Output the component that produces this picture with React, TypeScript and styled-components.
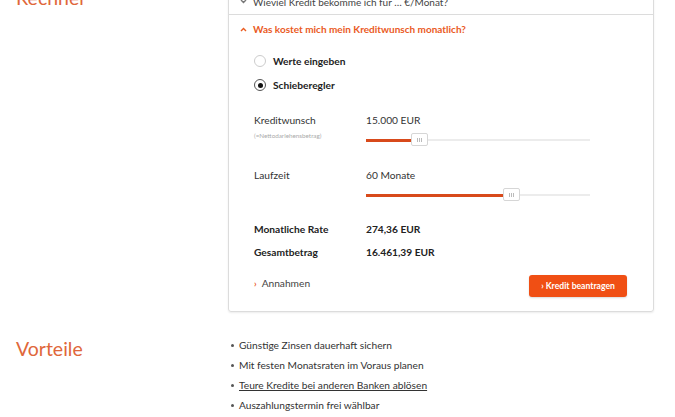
import React from "react";
import styled, { createGlobalStyle } from "styled-components";

const ORANGE = "#ea5a1e";
const TEXT = "10.2px";

const GlobalStyle = createGlobalStyle`
  body {
    margin: 0;
    background: #fff;
    font-family: Lato, "Open Sans", sans-serif;
    color: #333;
    overflow: hidden;
  }
`;

const Page = styled.div`
  margin-top: -14px;
  width: 675px;
`;

const Section = styled.section<{ gap?: number }>`
  display: grid;
  grid-template-columns: 228px 426px;
  margin-top: ${(p) => p.gap ?? 0}px;
`;

const Heading = styled.h2`
  margin: 0;
  padding-left: 16px;
  font-size: 19.5px;
  line-height: 24px;
  font-weight: 400;
  color: #e0673a;
`;

const Card = styled.div`
  border: 1px solid #dcdcdc;
  border-radius: 3px;
  box-shadow: 0 1px 2px rgba(0, 0, 0, 0.08);
  padding-bottom: 14px;
`;

const AccordionHead = styled.div<{ open?: boolean }>`
  display: flex;
  align-items: center;
  gap: 6px;
  height: 28px;
  padding-left: 11px;
  padding-top: ${(p) => (p.open ? 0 : 2)}px;
  box-sizing: border-box;
  font-size: 10px;
  font-weight: ${(p) => (p.open ? 700 : 400)};
  color: ${(p) => (p.open ? ORANGE : "#444")};
  border-bottom: ${(p) => (p.open ? "none" : "1px solid #dcdcdc")};
`;

const Chevron = styled.svg`
  width: 7px;
  height: 5px;
  flex: none;
`;

const Body = styled.div`
  padding: 6px 26px 0 25px;
`;

const RadioRow = styled.label`
  display: flex;
  align-items: center;
  gap: 7px;
  height: 24px;
  font-size: ${TEXT};
  font-weight: 700;
  color: #222;
`;

const RadioDot = styled.span<{ checked?: boolean }>`
  width: 10px;
  height: 10px;
  border-radius: 50%;
  border: 1px solid ${(p) => (p.checked ? "#555" : "#ccc")};
  display: grid;
  place-items: center;
  &::after {
    content: "";
    width: 5px;
    height: 5px;
    border-radius: 50%;
    background: ${(p) => (p.checked ? "#111" : "transparent")};
  }
`;

const SliderBlock = styled.div<{ top: number }>`
  display: grid;
  grid-template-columns: 112px 224px;
  margin-top: ${(p) => p.top}px;
`;

const Label = styled.div`
  font-size: ${TEXT};
  line-height: 12px;
  color: #333;
`;

const SubLabel = styled.div`
  font-size: 6.3px;
  line-height: 8px;
  margin-top: 6px;
  color: #aaa;
`;

const ValueCol = styled.div`
  display: flex;
  flex-direction: column;
  gap: 11px;
`;

const Track = styled.div`
  position: relative;
  height: 2px;
  background: #ececec;
  margin-top: 2px;
`;

const Fill = styled.div`
  height: 3px;
  margin-top: -0.5px;
  background: #d84a1b;
`;

const Thumb = styled.div`
  position: absolute;
  top: -6px;
  width: 17px;
  height: 13px;
  margin-left: -2px;
  background: #fff;
  border: 1px solid #d6d6d6;
  border-radius: 2px;
  box-sizing: border-box;
  display: flex;
  align-items: center;
  justify-content: center;
  gap: 1px;
  & > i {
    width: 1px;
    height: 4px;
    background: #bbb;
  }
`;

const ResultRow = styled.div<{ top: number }>`
  display: grid;
  grid-template-columns: 112px auto;
  margin-top: ${(p) => p.top}px;
  font-size: ${TEXT};
  line-height: 12px;
  font-weight: 700;
  color: #222;
`;

const Footer = styled.div`
  display: flex;
  justify-content: space-between;
  align-items: center;
  margin-top: 17px;
`;

const TextLink = styled.span`
  display: flex;
  align-items: center;
  gap: 5px;
  font-size: ${TEXT};
  color: #444;
  margin-top: -6px;
`;

const Caret = styled.span`
  color: ${ORANGE};
  font-weight: 700;
  font-size: 9px;
`;

const Button = styled.button`
  border: none;
  border-radius: 3px;
  background: #f04f14;
  color: #fff;
  font-family: inherit;
  font-weight: 700;
  font-size: 8.6px;
  height: 22px;
  width: 98px;
  padding: 0;
  box-shadow: 0 1px 2px rgba(0, 0, 0, 0.15);
`;

const List = styled.ul`
  margin: 0;
  padding: 2px 0 0 3px;
  list-style: none;
  display: flex;
  flex-direction: column;
  gap: 8px;
`;

const Item = styled.li<{ link?: boolean }>`
  display: flex;
  align-items: center;
  gap: 5px;
  font-size: ${TEXT};
  line-height: 12px;
  color: #333;
  text-decoration: ${(p) => (p.link ? "underline" : "none")};
  &::before {
    content: "";
    width: 3px;
    height: 3px;
    background: #555;
    border-radius: 50%;
    flex: none;
  }
`;

function Slider({ pct }: { pct: number }) {
  return (
    <Track>
      <Fill style={{ width: `${pct}%` }} />
      <Thumb style={{ left: `${pct}%` }}>
        <i />
        <i />
        <i />
      </Thumb>
    </Track>
  );
}

function ChevronIcon({ up }: { up?: boolean }) {
  return (
    <Chevron viewBox="0 0 7 5">
      <path
        d={up ? "M1 4 L3.5 1.5 L6 4" : "M1 1 L3.5 3.5 L6 1"}
        stroke={up ? ORANGE : "#777"}
        strokeWidth="1.4"
        fill="none"
      />
    </Chevron>
  );
}

export default function App() {
  return (
    <Page>
      <GlobalStyle />
      <Section>
        <Heading>Rechner</Heading>
        <Card>
          <AccordionHead>
            <ChevronIcon />
            Wieviel Kredit bekomme ich für … €/Monat?
          </AccordionHead>
          <AccordionHead open>
            <ChevronIcon up />
            Was kostet mich mein Kreditwunsch monatlich?
          </AccordionHead>
          <Body>
            <RadioRow>
              <RadioDot />
              Werte eingeben
            </RadioRow>
            <RadioRow>
              <RadioDot checked />
              Schieberegler
            </RadioRow>
            <SliderBlock top={17}>
              <div>
                <Label>Kreditwunsch</Label>
                <SubLabel>(=Nettodarlehensbetrag)</SubLabel>
              </div>
              <ValueCol>
                <Label>15.000 EUR</Label>
                <Slider pct={21} />
              </ValueCol>
            </SliderBlock>
            <SliderBlock top={28}>
              <Label>Laufzeit</Label>
              <ValueCol>
                <Label>60 Monate</Label>
                <Slider pct={62} />
              </ValueCol>
            </SliderBlock>
            <ResultRow top={27}>
              <span>Monatliche Rate</span>
              <span>274,36 EUR</span>
            </ResultRow>
            <ResultRow top={11}>
              <span>Gesamtbetrag</span>
              <span>16.461,39 EUR</span>
            </ResultRow>
            <Footer>
              <TextLink>
                <Caret>›</Caret>
                Annahmen
              </TextLink>
              <Button>› Kredit beantragen</Button>
            </Footer>
          </Body>
        </Card>
      </Section>
      <Section gap={25}>
        <Heading>Vorteile</Heading>
        <List>
          <Item>Günstige Zinsen dauerhaft sichern</Item>
          <Item>Mit festen Monatsraten im Voraus planen</Item>
          <Item link>Teure Kredite bei anderen Banken ablösen</Item>
          <Item>Auszahlungstermin frei wählbar</Item>
        </List>
      </Section>
    </Page>
  );
}
